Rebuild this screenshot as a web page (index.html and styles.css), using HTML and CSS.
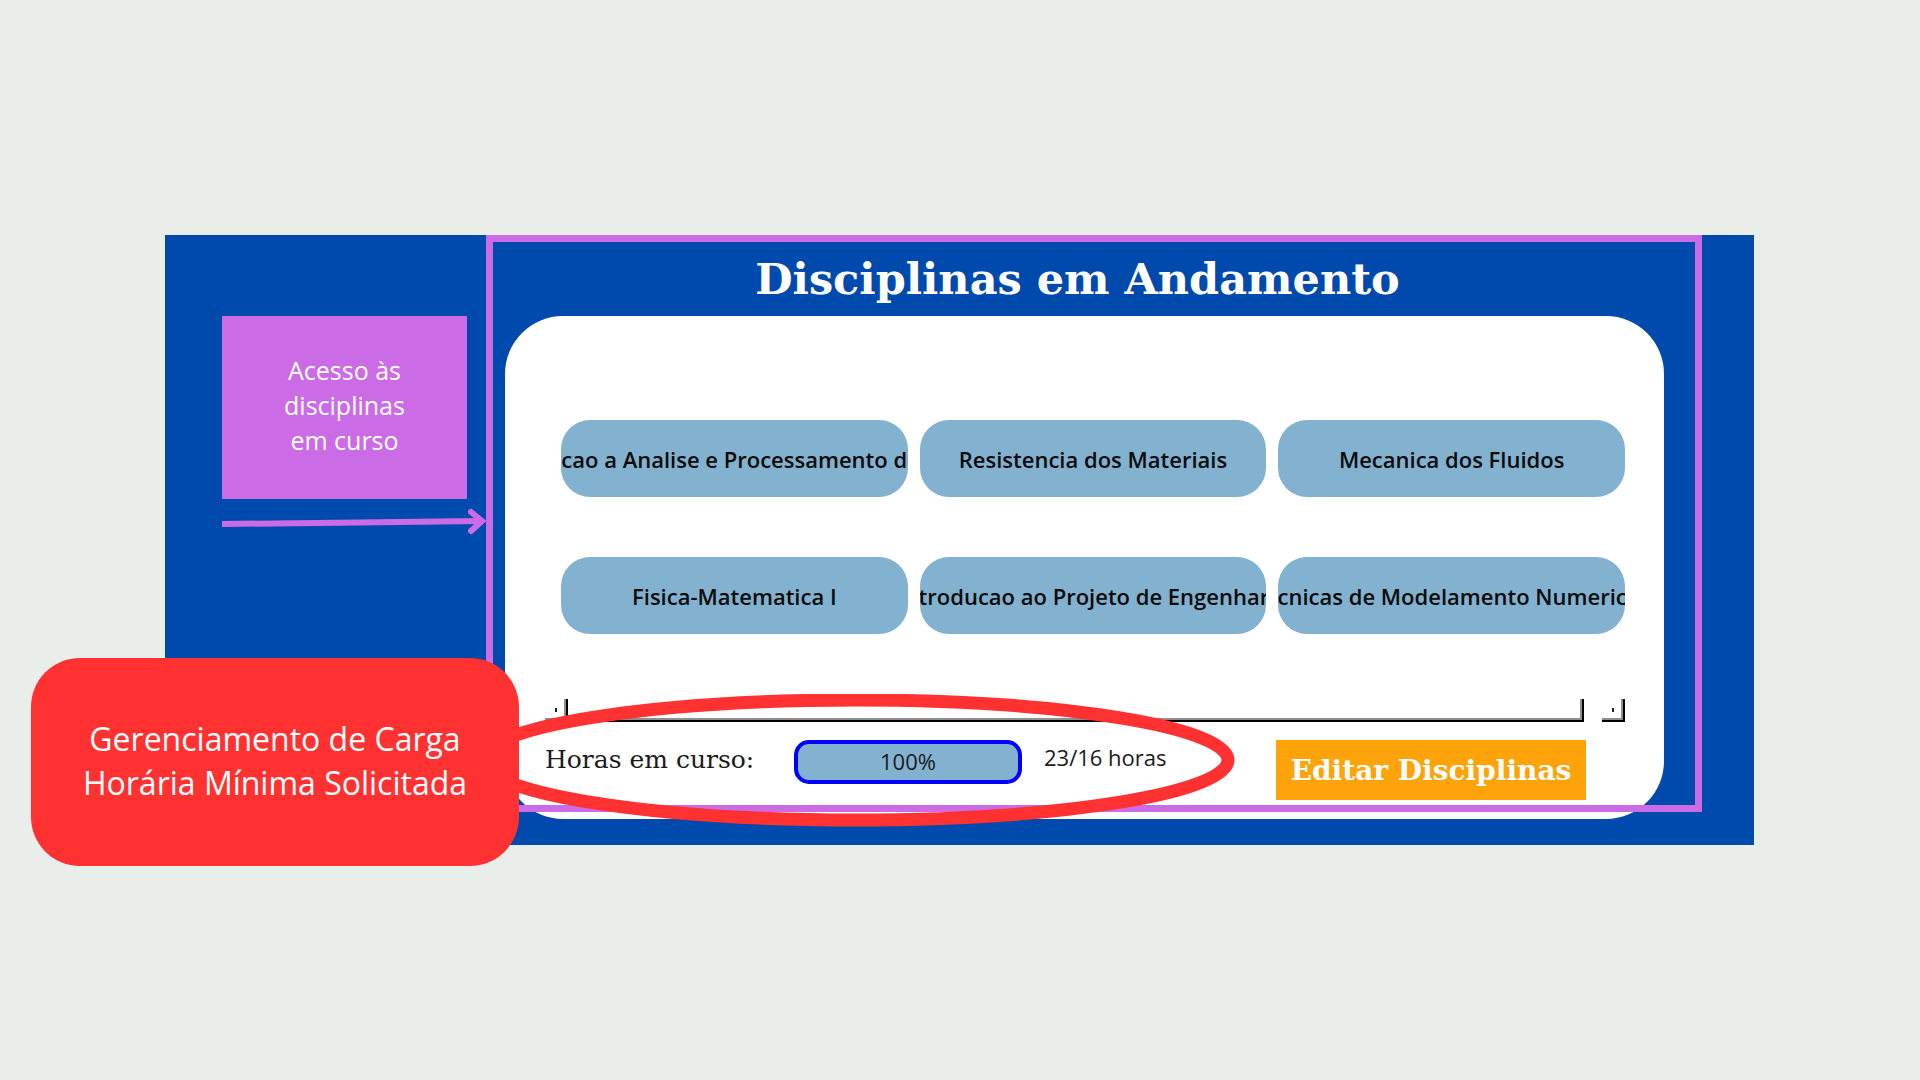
FILE: index.html
```html
<!DOCTYPE html>
<html lang="pt-BR">
<head>
<meta charset="utf-8">
<meta name="viewport" content="width=device-width, initial-scale=1">
<title>Disciplinas em Andamento</title>
<link rel="stylesheet" href="styles.css">
</head>
<body>
<div class="panel">
  <aside class="side">
    <p class="note">Acesso às<br>disciplinas<br>em curso</p>
    <svg class="arrow" viewBox="0 0 264 28" aria-hidden="true">
      <path d="M0 16 L260 13" stroke-width="6"/>
      <path d="M249 4 L260 13 L249 23" stroke-width="6" stroke-linecap="round" stroke-linejoin="miter"/>
    </svg>
  </aside>
  <main class="content">
    <h1 class="title">Disciplinas em Andamento</h1>
    <section class="card">
      <div class="courses">
        <button class="course"><span>Introducao a Analise e Processamento de Sinais</span></button>
        <button class="course"><span>Resistencia dos Materiais</span></button>
        <button class="course"><span>Mecanica dos Fluidos</span></button>
        <button class="course"><span>Fisica-Matematica I</span></button>
        <button class="course"><span>Introducao ao Projeto de Engenharia</span></button>
        <button class="course"><span>Tecnicas de Modelamento Numericos</span></button>
      </div>
      <div class="scroll">
        <button class="step bevel" aria-label="Rolar para a esquerda"></button>
        <div class="thumb bevel"></div>
        <button class="step bevel" aria-label="Rolar para a direita"></button>
      </div>
      <div class="footer">
        <span class="hours-label" id="hours-label">Horas em curso:</span>
        <div class="progress" role="progressbar" aria-valuenow="100" aria-labelledby="hours-label">100%</div>
        <span class="hours">23/16 horas</span>
        <button class="edit">Editar Disciplinas</button>
      </div>
    </section>
  </main>
  <svg class="ring" viewBox="0 0 760 133" aria-hidden="true">
    <ellipse cx="380" cy="66" rx="373" ry="60"/>
  </svg>
  <p class="callout">Gerenciamento de Carga<br>Horária Mínima Solicitada</p>
</div>
</body>
</html>
```
FILE: styles.css
```css
* {
  box-sizing: border-box;
}

body {
  margin: 0;
  min-height: 100vh;
  padding: 0 166px 0 165px;
  display: flex;
  align-items: center;
  background: #e9eeea;
  font-family: "Open Sans", "Noto Sans", sans-serif;
}

p,
h1 {
  margin: 0;
}

button {
  border: 0;
  padding: 0;
  font-family: inherit;
  cursor: pointer;
}

.panel {
  position: relative;
  flex: 1;
  display: grid;
  grid-template-columns: 321px minmax(0, 1fr);
  padding: 0 52px 26px 0;
  background: #004aad;
}

.side {
  padding: 81px 0 0 57px;
}

.note {
  display: flex;
  align-items: center;
  justify-content: center;
  width: 245px;
  height: 183px;
  padding-bottom: 4px;
  background: #cb6ce6;
  color: #fff;
  font-size: 25px;
  line-height: 35px;
  text-align: center;
}

.arrow {
  display: block;
  width: 264px;
  height: 28px;
  margin-top: 9px;
  fill: none;
  stroke: #cb6ce6;
}

.content {
  position: relative;
  padding: 0 38px 0 19px;
}

.content::after {
  content: "";
  position: absolute;
  inset: 0 0 7px;
  border: 7px solid #cb6ce6;
  pointer-events: none;
}

.title {
  height: 81px;
  padding: 4px 14px 0 0;
  color: #fff;
  font-family: "DejaVu Serif", serif;
  font-size: 43px;
  line-height: 81px;
  text-align: center;
  white-space: nowrap;
}

.card {
  padding: 104px 39px 19px 40px;
  border-radius: 58px;
  background: #fff;
}

.courses {
  display: grid;
  grid-template-columns: repeat(3, minmax(0, 1fr));
  gap: 60px 12px;
  padding-left: 16px;
}

.course {
  display: flex;
  align-items: center;
  justify-content: center;
  height: 77px;
  overflow: hidden;
  border-radius: 29px;
  background: #82b2cf;
  color: #0a0a0a;
  font-size: 22px;
  font-weight: 600;
  white-space: nowrap;
}

.scroll {
  display: flex;
  gap: 18px;
  margin: 65px 0 18px;
}

.bevel {
  height: 23px;
  border: solid #000;
  border-width: 0 2px 2px 0;
  background: #fff;
  box-shadow: inset -2px -2px #8f8f8f;
}

.step {
  display: flex;
  align-items: center;
  justify-content: center;
  width: 23px;
}

.step::before {
  content: "";
  width: 2px;
  height: 4px;
  background: #222;
}

.thumb {
  flex: 1;
}

.footer {
  display: flex;
  align-items: flex-start;
  padding-right: 39px;
  color: #1a1a1a;
  font-size: 22px;
}

.hours-label {
  width: 249px;
  font-family: "DejaVu Serif", serif;
  font-size: 25px;
  line-height: 40px;
  white-space: nowrap;
}

.progress {
  width: 228px;
  height: 44px;
  border: 4px solid #00f;
  border-radius: 15px;
  background: #82b2cf;
  line-height: 35px;
  text-align: center;
}

.hours {
  margin-left: 22px;
  line-height: 35px;
}

.edit {
  width: 310px;
  height: 60px;
  margin-left: auto;
  background: #ffa30b;
  color: #fff;
  font-family: "DejaVu Serif", serif;
  font-size: 28px;
  font-weight: 700;
}

.ring {
  position: absolute;
  left: 310px;
  bottom: 18px;
  width: 760px;
  height: 133px;
  fill: none;
  stroke: #ff3131;
  stroke-width: 13px;
}

.callout {
  position: absolute;
  left: -134px;
  bottom: -21px;
  display: flex;
  align-items: center;
  justify-content: center;
  width: 488px;
  height: 208px;
  padding-bottom: 2px;
  border-radius: 49px;
  background: #ff3131;
  color: #fff;
  font-size: 32px;
  line-height: 44px;
  text-align: center;
}
```
